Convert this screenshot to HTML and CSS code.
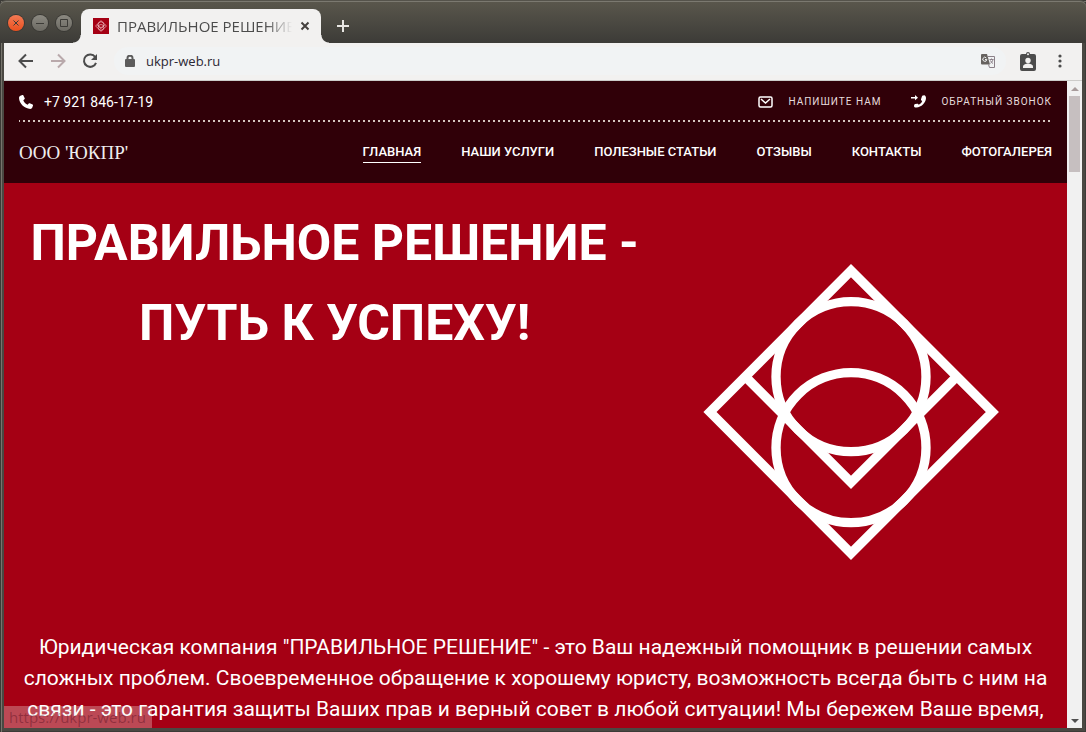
FILE: index.html
```html
<!DOCTYPE html>
<html lang="ru">
<head>
    <meta charset="UTF-8">
    <meta name="viewport" content="width=device-width, initial-scale=1.0">
    <title>ПРАВИЛЬНОЕ РЕШЕНИЕ</title>
    <link rel="stylesheet" href="styles.css">
</head>
<body>
    <div class="titlebar">
        <div class="window-buttons">
            <button class="window-button window-close" aria-label="Закрыть окно">
                <svg viewBox="0 0 16 16"><path d="M5.5 5.5l5 5M10.5 5.5l-5 5"/></svg>
            </button>
            <button class="window-button" aria-label="Свернуть">
                <svg viewBox="0 0 16 16"><path d="M4 8.5h8"/></svg>
            </button>
            <button class="window-button" aria-label="Развернуть">
                <svg viewBox="0 0 16 16"><path d="M4.5 4.5h7v7h-7z"/></svg>
            </button>
        </div>
        <div class="tab">
            <svg class="favicon" viewBox="-140 -140 1246 1252">
                <path class="favicon-bg" d="M-200-200h1366v1372H-200z"/>
                <g fill="none" stroke="#f3c9cd" stroke-width="50">
                    <path d="M483 62l424 424-424 424L60 486z"/>
                    <path d="M166 380l317 317 317-317"/>
                    <circle cx="483" cy="380" r="225"/>
                    <circle cx="483" cy="593" r="225"/>
                </g>
            </svg>
            <span class="tab-title">ПРАВИЛЬНОЕ РЕШЕНИЕ</span>
            <button class="tab-close" aria-label="Закрыть вкладку">
                <svg viewBox="0 0 10 10"><path d="M1.5 1.5l7 7M8.5 1.5l-7 7"/></svg>
            </button>
        </div>
        <button class="new-tab" aria-label="Новая вкладка">
            <svg viewBox="0 0 12 12"><path d="M6 0v12M0 6h12"/></svg>
        </button>
    </div>

    <div class="toolbar">
        <button class="tool" aria-label="Назад">
            <svg viewBox="0 0 16 16"><path d="M15 8H2M8 1.5L1.5 8 8 14.5"/></svg>
        </button>
        <button class="tool tool-disabled" aria-label="Вперёд">
            <svg viewBox="0 0 16 16"><path d="M1 8h13M8 1.5L14.5 8 8 14.5"/></svg>
        </button>
        <button class="tool" aria-label="Обновить">
            <svg viewBox="0 0 16 16"><path d="M13.2 4A6.2 6.2 0 1 0 14 9.8"/><path class="solid" d="M15 1v6H9z"/></svg>
        </button>
        <div class="address">
            <svg class="lock" viewBox="0 0 10 12">
                <path class="solid" d="M1 4h8a1 1 0 0 1 1 1v6a1 1 0 0 1-1 1H1a1 1 0 0 1-1-1V5a1 1 0 0 1 1-1z"/>
                <path d="M2.5 5V3a2.5 2.3 0 0 1 5 0v2"/>
            </svg>
            <input class="url" type="text" value="ukpr-web.ru" aria-label="Адрес">
            <button class="translate" aria-label="Перевести">
                <svg viewBox="0 0 14 14">
                    <path class="solid" d="M1 0h5l3 10.5H1a1 1 0 0 1-1-1V1a1 1 0 0 1 1-1z"/>
                    <path class="thin" d="M6.5 2.5h7v11h-5l-1-3"/>
                    <path class="thin" d="M8.5 5.5h4M10.5 4.5v1M12 5.5c-.5 2-1.5 3-2.5 3.8M9.5 6.5c.5 1.500 1.500 2.500 2.500 3"/>
                    <path class="light" d="M5.300 4A2 2 0 1 0 5.800 5.500H4"/>
                </svg>
            </button>
        </div>
        <button class="badge" aria-label="Профиль">
            <svg viewBox="0 0 16 19">
                <path class="solid" d="M2 2h4a2 2 0 0 1 4 0h4a2 2 0 0 1 2 2v13a2 2 0 0 1-2 2H2a2 2 0 0 1-2-2V4a2 2 0 0 1 2-2z"/>
                <circle cx="8" cy="2.2" r="1" fill="#f2f1f0"/>
                <circle cx="8" cy="8.5" r="2.7" fill="#f2f1f0"/>
                <path d="M3 16v-1.5c0-2 3.300-3 5-3s5 1 5 3V16z" fill="#f2f1f0"/>
            </svg>
        </button>
        <button class="menu" aria-label="Меню">
            <svg viewBox="0 0 4 14"><circle cx="2" cy="2" r="1.6"/><circle cx="2" cy="7" r="1.6"/><circle cx="2" cy="12" r="1.6"/></svg>
        </button>
    </div>

    <div class="viewport">
        <div class="page">
            <header class="header">
                <div class="contacts">
                    <a class="phone" href="tel:+79218461719">
                        <svg viewBox="0 0 14 14"><path d="M1.500.8L3.300 0c.5-.2.9 0 1.100.4l1.300 2.800c.2.4.1.8-.3 1.100L4.300 5.200c.8 2 2.300 3.600 4.400 4.500l1-1.100c.3-.4.7-.4 1.100-.3l2.800 1.300c.4.2.5.6.4 1l-.7 1.900c-.3.9-1 1.400-2 1.400C5.400 13.700.2 8.800 0 3.100 0 2 .5 1.200 1.500.8z"/></svg>
                        <span>+7 921 846-17-19</span>
                    </a>
                    <div class="contact-links">
                        <a class="contact-link" href="#">
                            <svg class="mail" viewBox="0 0 15 12"><rect x="1" y="1" width="13" height="10" rx="1.5"/><path d="M3 3l4.500 4L12 3"/></svg>
                            <span>НАПИШИТЕ НАМ</span>
                        </a>
                        <a class="contact-link" href="#">
                            <svg class="callback" viewBox="0 0 15 13"><path d="M12 .5l1.200-.2C14.300.5 15 1.700 15 3.200c-.2 4.500-4.600 9-9.600 9.300-1.500 0-2.400-.5-2.400-1.500l.2-1c.2-.5.5-.8 1-.9l2-.4c.5 0 .9.100 1.100.500l.4.6c1.700-.8 2.900-2.100 3.500-3.800l-.8-.6c-.4-.3-.5-.7-.4-1.200l.8-2.500c.2-.7.600-1.100 1.200-1.200zM0 2h4V0l3 2.700-3 2.600V3.400H0z"/></svg>
                            <span>ОБРАТНЫЙ ЗВОНОК</span>
                        </a>
                    </div>
                </div>
                <div class="main-nav">
                    <a class="brand" href="#">ООО 'ЮКПР'</a>
                    <nav>
                        <ul>
                            <li><a class="active" href="#">ГЛАВНАЯ</a></li>
                            <li><a href="#">НАШИ УСЛУГИ</a></li>
                            <li><a href="#">ПОЛЕЗНЫЕ СТАТЬИ</a></li>
                            <li><a href="#">ОТЗЫВЫ</a></li>
                            <li><a href="#">КОНТАКТЫ</a></li>
                            <li><a href="#">ФОТОГАЛЕРЕЯ</a></li>
                        </ul>
                    </nav>
                </div>
            </header>

            <main class="hero">
                <div class="hero-top">
                    <h1>ПРАВИЛЬНОЕ РЕШЕНИЕ - ПУТЬ К УСПЕХУ!</h1>
                    <svg class="logo" viewBox="40 42 886 888">
                        <path d="M483 62l424 424-424 424L60 486z"/>
                        <path d="M166 380l317 317 317-317"/>
                        <circle cx="483" cy="380" r="225"/>
                        <circle cx="483" cy="593" r="225"/>
                    </svg>
                </div>
                <p>Юридическая компания "ПРАВИЛЬНОЕ РЕШЕНИЕ" - это Ваш надежный помощник в решении самых сложных проблем. Своевременное обращение к хорошему юристу, возможность всегда быть с ним на связи - это гарантия защиты Ваших прав и верный совет в любой ситуации! Мы бережем Ваше время,</p>
            </main>
        </div>
        <div class="scrollbar">
            <span class="arrow arrow-up"></span>
            <span class="thumb"></span>
            <span class="arrow arrow-down"></span>
        </div>
        <div class="status">https://ukpr-web.ru</div>
    </div>
</body>
</html>
```
FILE: styles.css
```css
* {
    box-sizing: border-box;
}

body {
    font-family: Roboto, "Liberation Sans", sans-serif;
    margin: 0;
    padding: 0 4px 4px;
    height: 100vh;
    display: flex;
    flex-direction: column;
    overflow: hidden;
    background-color: #4a4842;
    box-shadow: inset 1px 1px 0 #3c3b37, inset 2px 2px 0 #77756d, inset -1px -1px 0 #3c3b37;
}

button {
    border: none;
    padding: 0;
    background: none;
    cursor: pointer;
}

svg {
    display: block;
}

a {
    color: inherit;
    text-decoration: none;
}

/* window frame */
.titlebar {
    height: 43px;
    flex: none;
    display: flex;
    align-items: flex-end;
    margin: 0 -4px;
    padding: 0 8px;
    background: linear-gradient(#5a574c, #3c3b37);
    border-top: 1px solid #55534b;
    box-shadow: inset 0 1px 0 #7b7970;
    border-radius: 6px 6px 0 0;
}

.window-buttons {
    display: flex;
    gap: 8px;
    padding-bottom: 12px;
}

.window-button {
    width: 16px;
    height: 16px;
    border-radius: 50%;
    background: linear-gradient(#8b8981, #6c6a63);
    box-shadow: 0 0 0 1px #3a3935;
}

.window-button path {
    fill: none;
    stroke: #3c3b37;
}

.window-close {
    background: linear-gradient(#f37a54, #e9501f);
}

.tab {
    display: flex;
    align-items: center;
    width: 240px;
    height: 34px;
    margin-left: 9px;
    padding: 0 11px 0 12px;
    border-radius: 8px 8px 0 0;
    background-color: #f2f1f0;
    position: relative;
}

/* flared feet of the tab */
.tab::before,
.tab::after {
    content: "";
    position: absolute;
    bottom: 0;
    width: 8px;
    height: 8px;
}

.tab::before {
    left: -8px;
    background: radial-gradient(circle at 0 0, transparent 7px, #f2f1f0 8px);
}

.tab::after {
    right: -8px;
    background: radial-gradient(circle at 100% 0, transparent 7px, #f2f1f0 8px);
}

.favicon {
    width: 16px;
    height: 16px;
    margin-right: 8px;
}

.favicon-bg {
    fill: #a50014;
}

.tab-title {
    flex: 1;
    overflow: hidden;
    white-space: nowrap;
    font-family: "Open Sans", sans-serif;
    font-size: 15px;
    line-height: 20px;
    color: #4c4c4c;
    -webkit-mask-image: linear-gradient(to right, #000 85%, transparent);
    mask-image: linear-gradient(to right, #000 85%, transparent);
}

.tab-close {
    margin-left: 8px;
}

.tab-close svg {
    width: 10px;
    height: 10px;
    fill: none;
    stroke: #45413e;
    stroke-width: 2;
}

.new-tab {
    margin: 0 0 11px 16px;
}

.new-tab svg {
    width: 12px;
    height: 12px;
    stroke: #e8e6e3;
    stroke-width: 2;
}

.toolbar {
    height: 38px;
    flex: none;
    display: flex;
    align-items: center;
    padding: 0 20px 1px 14px;
    background-color: #f2f1f0;
    border-bottom: 1px solid #cdccca;
}

.tool {
    margin-right: 16px;
}

.tool svg {
    width: 16px;
    height: 16px;
    fill: none;
    stroke: #4c4c4c;
    stroke-width: 2;
}

.tool-disabled svg {
    stroke: #b9a9ab;
}

.tool .solid,
.translate .solid,
.badge .solid {
    fill: #4c4c4c;
    stroke: none;
}

.address {
    flex: 1;
    display: flex;
    align-items: center;
    height: 28px;
    padding: 0 11px 0 11px;
    border-radius: 14px;
    background-color: #f1f3f4;
}

.lock {
    width: 10px;
    height: 12px;
    fill: none;
    stroke: #5c5c5c;
    stroke-width: 2;
}

.lock .solid {
    fill: #5c5c5c;
    stroke: none;
}

.url {
    flex: 1;
    min-width: 0;
    margin-left: 11px;
    padding: 0;
    border: none;
    outline: none;
    background: none;
    font-family: "Open Sans", sans-serif;
    font-size: 13px;
    color: #2b2733;
}

.translate svg {
    width: 14px;
    height: 14px;
    fill: none;
}

.translate .solid {
    fill: #66625f;
}

.thin {
    stroke: #8b8088;
}

.light {
    stroke: #f1f3f4;
}

.badge {
    margin-left: 14px;
}

.badge svg {
    width: 16px;
    height: 19px;
}

.menu {
    margin-left: 22px;
}

.menu svg {
    width: 4px;
    height: 14px;
    fill: #4c4c4c;
}

.viewport {
    flex: 1;
    min-height: 0;
    display: flex;
    position: relative;
}

.page {
    flex: 1;
    overflow: hidden;
    background-color: #a50014;
    color: #fff;
}

/* site header */
.header {
    padding: 0 15px;
    background-color: #300008;
}

.contacts {
    display: flex;
    justify-content: space-between;
    align-items: center;
    height: 41px;
    background: repeating-linear-gradient(to right, #d5c6c0 0 2px, transparent 2px 5px) -1px 100% / 3000px 2px no-repeat;
}

.phone {
    display: flex;
    align-items: center;
    gap: 11px;
    font-size: 14px;
}

.phone svg {
    width: 14px;
    height: 14px;
    fill: #fff;
}

.contact-links {
    display: flex;
    gap: 30px;
}

.contact-link {
    display: flex;
    align-items: center;
    gap: 15px;
    font-size: 10px;
    letter-spacing: 1px;
    color: #e6dcdd;
}

.mail {
    width: 15px;
    height: 12px;
    fill: none;
    stroke: #fff;
    stroke-width: 1.5;
}

.callback {
    width: 15px;
    height: 13px;
    fill: #fff;
}

.main-nav {
    display: flex;
    justify-content: space-between;
    align-items: center;
    height: 61px;
}

.brand {
    font-family: "Liberation Serif", serif;
    font-size: 19px;
    color: #eee;
}

.main-nav ul {
    display: flex;
    gap: 40px;
    list-style: none;
    margin: 0;
    padding: 0;
}

.main-nav li a {
    display: block;
    font-size: 13px;
    font-weight: 500;
    line-height: 20px;
    border-bottom: 1px solid transparent;
}

.main-nav li .active {
    border-bottom-color: #fff;
}

/* first screen */
.hero {
    padding: 20px 15px 0;
    text-align: center;
}

.hero-top {
    display: grid;
    grid-template-columns: 11fr 7fr;
    justify-items: center;
}

.hero h1 {
    margin: 0;
    font-size: 50px;
    font-weight: 700;
    line-height: 80px;
}

.logo {
    width: 296px;
    height: 296px;
    margin: 61px 0 72px;
    fill: none;
    stroke: #fff;
    stroke-width: 28;
}

.hero p {
    margin: 0;
    font-size: 21px;
    line-height: 31px;
}

.scrollbar {
    flex: none;
    width: 15px;
    display: flex;
    flex-direction: column;
    align-items: center;
    padding: 6px 2px 5px;
    background-color: #f1f1f1;
}

.arrow {
    border: 4px solid transparent;
}

.arrow-up {
    border-top: none;
    border-bottom-color: #a89c9c;
}

.arrow-down {
    border-bottom: none;
    border-top-color: #505050;
    margin-top: auto;
}

.thumb {
    width: 11px;
    height: 76px;
    margin-top: 5px;
    background-color: #c6bfc0;
}

/* link preview over the page corner */
.status {
    position: absolute;
    left: 0;
    bottom: 0;
    padding: 0 6px 0 5px;
    font-family: "Open Sans", sans-serif;
    font-size: 15px;
    line-height: 22px;
    color: rgba(60, 0, 20, 0.35);
    background-color: rgba(242, 241, 240, 0.3);
}
```
